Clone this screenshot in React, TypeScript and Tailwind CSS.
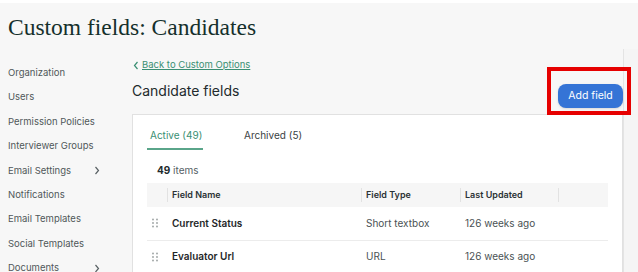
const navItems = [
  { label: 'Organization' },
  { label: 'Users' },
  { label: 'Permission Policies' },
  { label: 'Interviewer Groups' },
  { label: 'Email Settings', more: true },
  { label: 'Notifications' },
  { label: 'Email Templates' },
  { label: 'Social Templates' },
  { label: 'Documents', more: true },
];

const rows = [
  { name: 'Current Status', type: 'Short textbox', updated: '126 weeks ago' },
  { name: 'Evaluator Url', type: 'URL', updated: '126 weeks ago' },
];

const sans = { fontFamily: 'Inter, "Noto Sans", sans-serif' };

function Chevron({ left = false }: { left?: boolean }) {
  return (
    <svg width="6" height="9" viewBox="0 0 6 9" fill="none" stroke="currentColor" strokeWidth="1.2">
      {left ? <path d="M4.5 1 1.5 4.5 4.5 8" /> : <path d="M1.5 1 4.5 4.5 1.5 8" />}
    </svg>
  );
}

function DragHandle() {
  return (
    <svg width="6" height="10" viewBox="0 0 6 10" fill="#9aa0a0">
      <circle cx="1" cy="1.5" r="0.9" />
      <circle cx="5" cy="1.5" r="0.9" />
      <circle cx="1" cy="5" r="0.9" />
      <circle cx="5" cy="5" r="0.9" />
      <circle cx="1" cy="8.5" r="0.9" />
      <circle cx="5" cy="8.5" r="0.9" />
    </svg>
  );
}

export default function App() {
  return (
    <div className="w-[638px] h-[272px] overflow-hidden bg-[#f7f7f7] border-t-[3px] border-white" style={sans}>
      {/* Page title */}
      <h1
        className="pl-2 pt-[10px] h-[46px] text-[23.5px] leading-[28px] text-[#15302c]"
        style={{ fontFamily: '"Liberation Serif", "Times New Roman", serif' }}
      >
        Custom fields: Candidates
      </h1>

      <div className="flex h-[300px]">
        {/* Sidebar */}
        <nav className="w-[132px] shrink-0 pt-[12px]">
          {navItems.map((n) => (
            <div key={n.label} className="h-[24.4px] flex items-center pl-2 text-[9.5px] text-[#50585a] whitespace-nowrap">
              <span className="w-[86px]">{n.label}</span>
              {n.more && (
                <span className="text-[#5a6265]">
                  <Chevron />
                </span>
              )}
            </div>
          ))}
        </nav>

        {/* Main */}
        <div className="w-[491px] shrink-0">
          <a className="flex items-center gap-[3px] mt-[9px] h-[14px] text-[9.5px] text-[#3a8f73] underline pl-[1px]">
            <Chevron left />
            <span>Back to Custom Options</span>
          </a>

          <div className="flex items-start justify-between mt-[6px] h-[28px]">
            <h2 className="pt-[3px] text-[14px] leading-[20px] text-[#222a2c]">Candidate fields</h2>
            <div className="relative mt-[3px]">
              <button className="w-[65px] h-[24px] rounded-[8px] bg-[#3574d6] text-white text-[10.5px] shadow-sm">
                Add field
              </button>
              <div className="absolute -left-[11px] -top-[14px] w-[84px] h-[48px] border-4 border-[#e60000]" />
            </div>
          </div>

          {/* Card */}
          <div className="mt-[8px] h-[200px] bg-white border border-[#e1e1e1] border-b-0 px-[14px]">
            <div className="flex pt-[13px] text-[10px]">
              <div className="flex flex-col w-[56px]">
                <span className="pl-[3px] text-[#3a8f73] leading-[14px] whitespace-nowrap">Active (49)</span>
                <span className="mt-[6px] w-[56px] h-[2px] bg-[#5aa58a]" />
              </div>
              <span className="ml-[41px] text-[#3a4244] leading-[14px]">Archived (5)</span>
            </div>

            <div className="mt-[13px] pl-[10px] text-[10px] text-[#556064] h-[14px] leading-[14px]">
              <b className="text-[#222a2c]">49</b> items
            </div>

            <table className="mt-[6px] w-full border-collapse text-[9px]">
              <thead>
                <tr className="h-[24px] bg-[#f6f6f6] text-left text-[#2a3234]">
                  <th className="w-[20px] p-0"></th>
                  <th className="p-0 font-semibold">
                    <span className="block border-l border-[#e2e2e2] pl-[4px]">Field Name</span>
                  </th>
                  <th className="w-[99px] p-0 font-semibold">
                    <span className="block border-l border-[#e2e2e2] pl-[4px]">Field Type</span>
                  </th>
                  <th className="w-[98px] p-0 font-semibold">
                    <span className="block border-l border-[#e2e2e2] pl-[4px]">Last Updated</span>
                  </th>
                  <th className="w-[50px] p-0">
                    <span className="block border-l border-[#e2e2e2] h-[14px]"></span>
                  </th>
                </tr>
              </thead>
              <tbody>
                {rows.map((r) => (
                  <tr key={r.name} className="h-[33px] border-b border-[#ececec]">
                    <td className="p-0 pl-[5px] align-middle">
                      <DragHandle />
                    </td>
                    <td className="p-0 pl-[5px] text-[10px] font-semibold text-[#1f2729]">{r.name}</td>
                    <td className="p-0 pl-[5px] text-[10px] text-[#4a5254]">{r.type}</td>
                    <td className="p-0 pl-[5px] text-[10px] text-[#4a5254]">{r.updated}</td>
                    <td className="p-0"></td>
                  </tr>
                ))}
              </tbody>
            </table>
          </div>
        </div>

        {/* Scroll track */}
        <div className="flex-1 bg-[#f5f5f5] border-l border-[#e4e4e4]" />
      </div>
    </div>
  );
}
